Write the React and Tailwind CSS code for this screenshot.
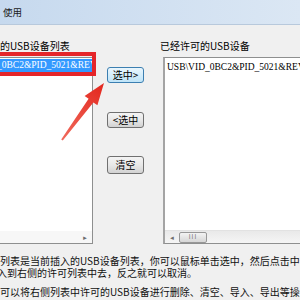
import React from 'react';

const cjk = "font-['Noto_Sans_CJK_SC','Noto_Sans',sans-serif]";
const serif = "font-['Liberation_Serif',serif]";

function WinButton({ children, hot, className = '' }) {
  const look = hot
    ? 'border-[#3c7fb1] bg-gradient-to-b from-[#eaf6fd] to-[#bfe4f8]'
    : 'border-[#707070] bg-gradient-to-b from-[#f4f4f4] via-[#e8e8e8] to-[#d2d2d2]';
  return (
    <div
      className={`w-[37px] flex items-center justify-center rounded-[3px] border text-[10px] leading-none text-black ${look} ${className}`}
    >
      {children}
    </div>
  );
}

function Arrow() {
  return (
    <svg className="absolute left-0 top-0" width="300" height="300" viewBox="0 0 300 300">
      <defs>
        <linearGradient id="arrowFill" x1="62" y1="140" x2="104" y2="83" gradientUnits="userSpaceOnUse">
          <stop offset="0" stopColor="#f06a5c" />
          <stop offset="1" stopColor="#e3261d" />
        </linearGradient>
      </defs>
      <polygon
        points="104,83 97.4,105.3 93.4,102.4 62.8,140.6 61.2,139.4 88.6,98.8 84.6,95.9"
        fill="url(#arrowFill)"
      />
    </svg>
  );
}

export default function App() {
  return (
    <div className={`relative w-[300px] h-[300px] overflow-hidden bg-[#f0f0f0] ${cjk}`}>
      {/* Title bar */}
      <div className="h-[25px] flex items-center pl-[3px] bg-gradient-to-r from-[#c6d9ee] to-[#dbe7f4] border-b border-[#b8c9dc] text-[9.5px] text-[#1a1a1a]">
        使用
      </div>

      {/* Lists and buttons */}
      <div className="flex pt-[15px]">
        {/* Left list */}
        <div className="-ml-[10px] w-[103px] shrink-0 flex flex-col">
          <div className="pl-[10px] h-[12px] text-[10px] leading-[12px] text-black whitespace-nowrap">的USB设备列表</div>
          <div className="mt-[5px] h-[187px] bg-white border border-[#8e8f8f] flex flex-col justify-between overflow-hidden">
            <div className="mt-[1px] h-[13px] bg-[#3399ff] overflow-hidden">
              <div className={`-ml-[32px] text-[9.5px] leading-[13px] text-white whitespace-nowrap ${serif}`}>
                USB\VID_0BC2&amp;PID_5021&amp;REV_0000
              </div>
            </div>
            <div className="h-[12px] flex justify-end items-center pr-[4px] bg-[#f7f7f7]">
              <span className="text-[6px] text-[#6d6d6d]">►</span>
            </div>
          </div>
        </div>

        {/* Middle buttons */}
        <div className="w-[67px] shrink-0 flex flex-col pl-[14px] pt-[27px]">
          <WinButton hot className="h-[16px]">选中&gt;</WinButton>
          <WinButton className="h-[16px] mt-[29px]">&lt;选中</WinButton>
          <WinButton className="h-[18px] mt-[28px]">清空</WinButton>
        </div>

        {/* Right list */}
        <div className="flex-1 flex flex-col min-w-0">
          <div className="h-[12px] text-[10px] leading-[12px] text-black whitespace-nowrap">已经许可的USB设备</div>
          <div className="ml-[3px] -mr-[20px] mt-[5px] h-[187px] bg-white border border-[#8e8f8f] border-l-2 border-l-[#a4a4a4] flex flex-col justify-between overflow-hidden">
            <div className={`mt-[3px] pl-[2px] text-[9.5px] leading-[13px] text-black whitespace-nowrap ${serif}`}>
              USB\VID_0BC2&amp;PID_5021&amp;REV_0000
            </div>
            <div className="h-[13px] flex items-center bg-gradient-to-b from-[#e9e9e9] to-[#f5f5f5] border-t border-[#e2e2e2]">
              <span className="w-[14px] text-center text-[6px] text-[#6d6d6d]">◄</span>
              <div className="w-[28px] h-[11px] rounded-[2px] border border-[#979797] bg-gradient-to-b from-[#f3f3f3] to-[#d6d6d6] flex items-center justify-center">
                <span className="text-[6px] leading-none text-[#707070] tracking-[1px]">III</span>
              </div>
            </div>
          </div>
        </div>
      </div>

      {/* Description */}
      <div className="mt-[11px] text-[10px] text-[#111] whitespace-nowrap">
        <div className="leading-[12px]">列表是当前插入的USB设备列表，你可以鼠标单击选中，然后点击中部的按钮导</div>
        <div className="leading-[12px] -ml-[3px]">入到右侧的许可列表中去，反之就可以取消。</div>
        <div className="leading-[12px] mt-[7px]">可以将右侧列表中许可的USB设备进行删除、清空、导入、导出等操作。</div>
      </div>

      {/* Annotations */}
      <div className="absolute -left-[4px] top-[52px] w-[100px] h-[24px] border-[4px] border-[#e5262a]" />
      <Arrow />
    </div>
  );
}
